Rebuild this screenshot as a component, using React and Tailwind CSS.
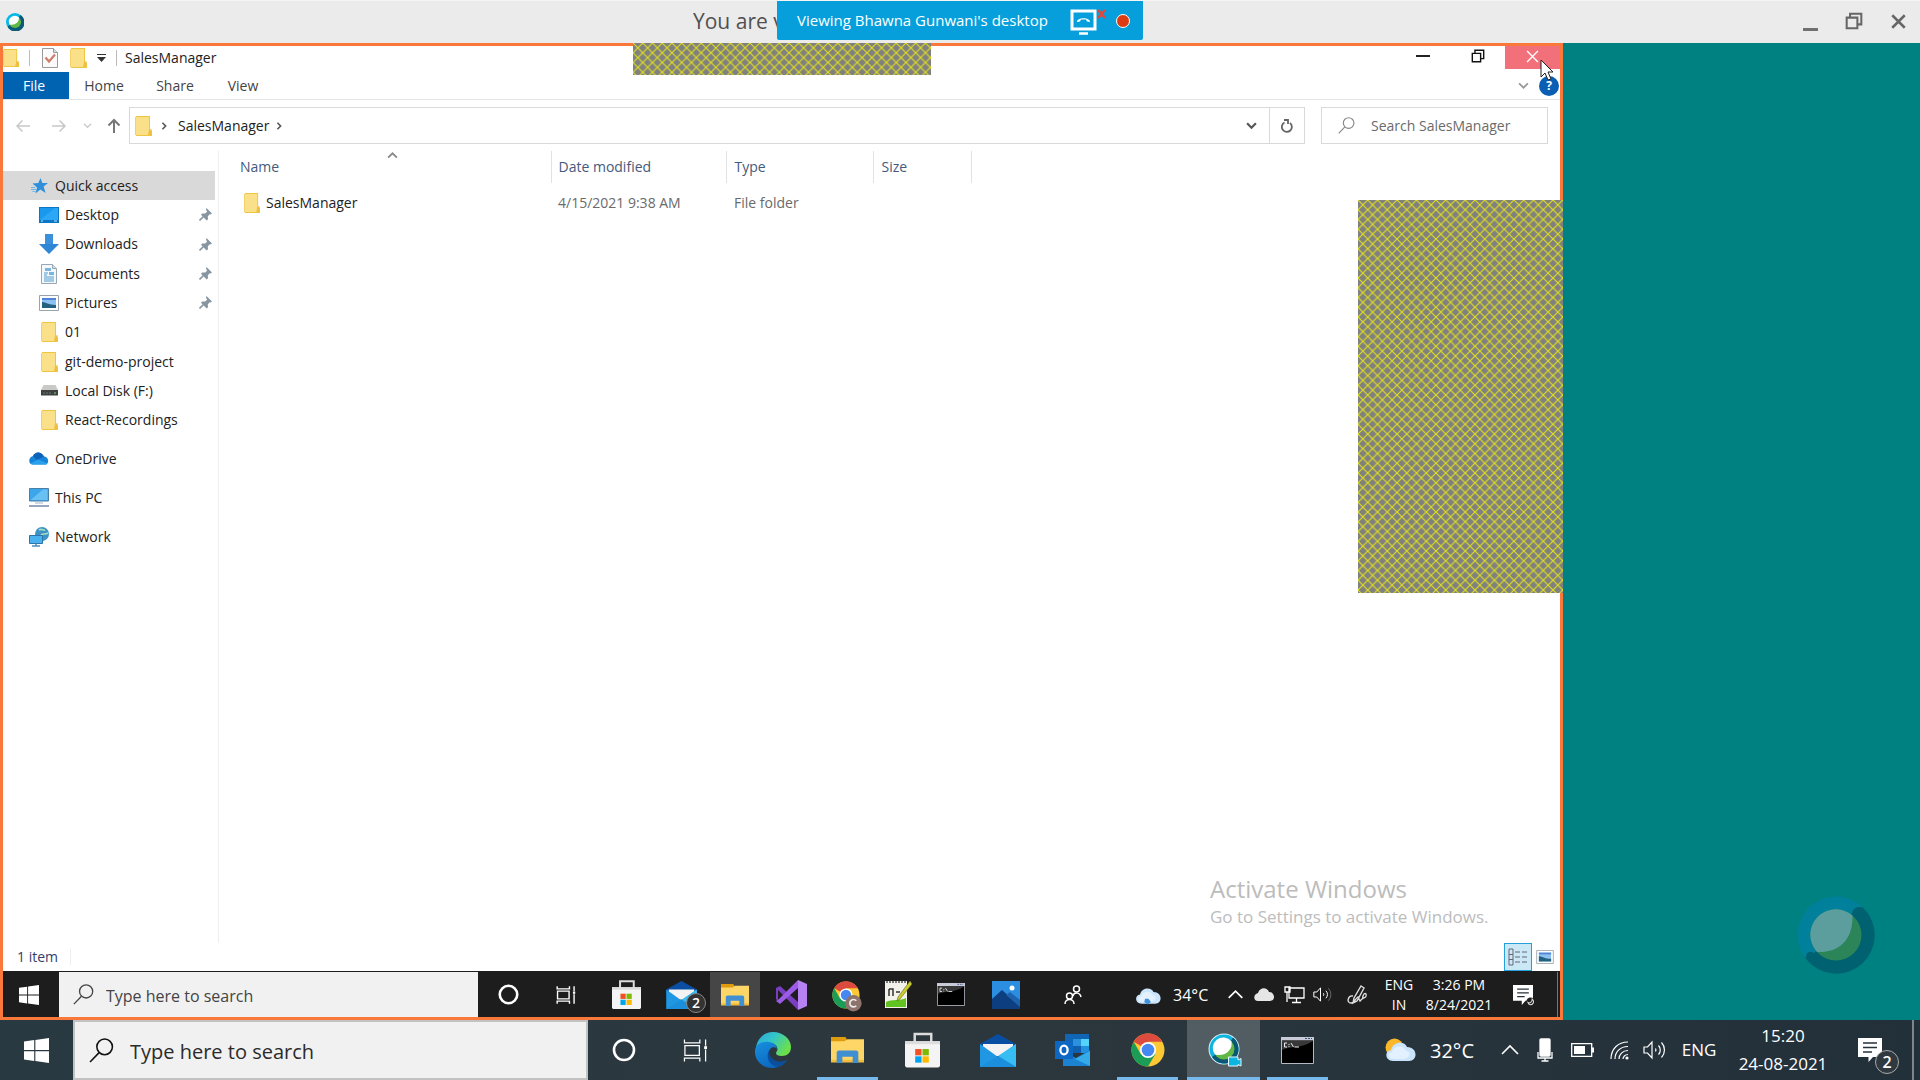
import React from "react";

const Folder = ({ className = "w-[17px] h-5" }) => (
  <svg viewBox="0 0 17 20" className={className} preserveAspectRatio="none" aria-hidden="true">
    <path d="M1 0h14v14l2 1v5H1z" fill="#efc544" />
    <path d="M0 1h14v13h2v5H0z" fill="#fbe08a" />
    <path d="M14 14l2.5-1V19H13z" fill="#edc040" />
    <path d="M0 1h1v18H0z" fill="#f3d069" />
  </svg>
);

const Chevron = ({ dir = "down", size = 10, color = "#555", width = 1.6 }) => {
  const d = {
    down: "M1 3l4 4 4-4",
    up: "M1 7l4-4 4 4",
    right: "M3 1l4 4-4 4",
  }[dir];
  return (
    <svg viewBox="0 0 10 10" width={size} height={size} fill="none" stroke={color} strokeWidth={width} aria-hidden="true">
      <path d={d} />
    </svg>
  );
};

const Arrow = ({ dir, color, width = 1.5 }) => {
  const d = {
    left: "M15 8H2M7.500 2.500L2 8l5.500 5.500",
    right: "M1 8h13M8.500 2.500L14 8l-5.500 5.500",
    up: "M8 15V2M2.500 7.500L8 2l5.500 5.500",
  }[dir];
  return (
    <svg viewBox="0 0 16 16" width="16" height="16" fill="none" stroke={color} strokeWidth={width} aria-hidden="true">
      <path d={d} />
    </svg>
  );
};

const Magnifier = ({ size, color, width = 1.5 }) => (
  <svg viewBox="0 0 24 24" width={size} height={size} fill="none" stroke={color} strokeWidth={width} aria-hidden="true">
    <circle cx="15" cy="8.500" r="7.500" />
    <path d="M9.700 14L1 23" />
  </svg>
);

const WindowsLogo = ({ size }) => (
  <svg viewBox="0 0 24 24" width={size} height={size} fill="#fff" aria-hidden="true">
    <path d="M0 3.400L9.800 2v9.500H0zM10.900 1.900L24 0v11.500H10.900zM0 12.600h9.800v9.500L0 20.700zM10.900 12.600H24V24l-13.100-1.900z" />
  </svg>
);

const Star = () => (
  <svg viewBox="0 0 18 16" width="18" height="16" aria-hidden="true">
    <path d="M9.500 0l1.800 5H17l-4.400 3.500 2 6.500-5.300-3.500L4.500 15.500 6 9.500 1.500 5.500l5.800-.5z" fill="#2f8fdd" />
    <path d="M0 11.500h5M1.500 13.500h3M0 9.500h4" stroke="#6cb6ea" strokeWidth="1" />
  </svg>
);

const Desktop = () => (
  <svg viewBox="0 0 20 16" width="20" height="16" aria-hidden="true">
    <path d="M0 0h20v16H0z" fill="#0b76c4" />
    <path d="M1 1h18v12H1z" fill="#1a98ee" />
    <path d="M1 13L16 1h3v12z" fill="#2ba7f5" />
    <path d="M2 14h2M15 14h3" stroke="#bde3ff" />
  </svg>
);

const Download = () => (
  <svg viewBox="0 0 20 20" width="20" height="20" aria-hidden="true">
    <path d="M6 0h8v10h6L10 20 0 10h6z" fill="#2f86d6" />
    <path d="M6 0h8v10h-8z" fill="#3a90dd" />
  </svg>
);

const Doc = () => (
  <svg viewBox="0 0 16 20" width="16" height="20" aria-hidden="true">
    <path d="M.5.5h11l4 4v15H.5z" fill="#f4f8fa" stroke="#99a7b1" />
    <path d="M11.500.500v4h4" fill="#d5dde2" stroke="#99a7b1" />
    <path d="M4 4h6v3H4zM8 8h5v3H8z" fill="#79b6df" />
    <path d="M3 9h4M3 11h3M3 13h10M3 15h10M3 17h10" stroke="#4f9bd0" />
  </svg>
);

const Picture = ({ w = 20, h = 16 }) => (
  <svg viewBox="0 0 20 16" width={w} height={h} aria-hidden="true">
    <path d="M.5.5h19v15H.5z" fill="#fff" stroke="#9aa3ab" />
    <path d="M3 3h14v10H3z" fill="#8fc0f2" />
    <path d="M3 3h14v2H3z" fill="#4f84d6" />
    <path d="M3 7c4 0 6 3 14 3v3H3z" fill="#24607f" />
  </svg>
);

const Disk = () => (
  <svg viewBox="0 0 17 11" width="17" height="11" aria-hidden="true">
    <path d="M2.500 0h12L17 5H0z" fill="#c9c9c7" />
    <path d="M0 5h17v5.500H0z" fill="#3d423f" />
    <path d="M2 8h8" stroke="#6f7672" strokeDasharray="2 1" />
    <path d="M13 8h2" stroke="#7fd08a" />
  </svg>
);

const OneDrive = () => (
  <svg viewBox="0 0 20 13" width="20" height="13" aria-hidden="true">
    <path d="M4 4C6-.5 12-1 15 4.500c4 0 6 6 2 8H4C-1 12.500-1 5 4 4z" fill="#1583d8" />
    <path d="M4 4C6-.5 12-1 15 4.500L8 8z" fill="#0b62b8" />
    <path d="M1.500 11.500L9 7.500l9.500 4c-.5.700-1 1-1.500 1H4c-1 0-2-.3-2.500-1z" fill="#2ba1ee" />
  </svg>
);

const Pc = () => (
  <svg viewBox="0 0 20 19" width="20" height="19" aria-hidden="true">
    <path d="M.5.5h19v12.500H.5z" fill="#3ba6ea" stroke="#4b7fa8" />
    <path d="M1.500 12L14 1.500h4.500V12z" fill="#69c0f3" />
    <path d="M6 15h8" stroke="#a9b5c4" />
    <path d="M0 18h20" stroke="#7687a8" strokeWidth="1.5" />
  </svg>
);

const NetworkIcon = () => (
  <svg viewBox="0 0 20 20" width="20" height="20" aria-hidden="true">
    <circle cx="13" cy="7" r="7" fill="#3d94c4" />
    <path d="M10 3c3-2 4 1 6 0M12 8c2-2 4 0 7-2" stroke="#a6dcc5" strokeWidth="1.6" fill="none" />
    <path d="M.5 8.500h13v8H.5z" fill="#49b2ee" stroke="#2c74ab" />
    <path d="M3 19h8M7 16.500V19" stroke="#4f8fb8" strokeWidth="1.5" />
  </svg>
);

const Pin = () => (
  <svg viewBox="0 0 13 13" width="13" height="13" aria-hidden="true">
    <path d="M7.500 0l5.500 5.500-1.500 1-.7-.3-2 2 .2 3-1.300 1.300L2 6.800l1.200-1.400 3 .2 2-2L7 2z" fill="#8795a1" />
    <path d="M5 8L.5 12.500" stroke="#8795a1" strokeWidth="1.600" />
  </svg>
);

const CheckDoc = () => (
  <svg viewBox="0 0 16 20" width="16" height="20" aria-hidden="true">
    <path d="M.5.5h11l4 4v15H.5z" fill="#fafafa" stroke="#9a9a9a" />
    <path d="M11.500.500v4h4" fill="#ddd" stroke="#9a9a9a" />
    <path d="M3.500 9.500l3.500 4 6-7" stroke="#cf7d6a" strokeWidth="2.200" fill="none" />
  </svg>
);

const Restore = ({ size, color, width = 1.4 }) => (
  <svg viewBox="0 0 16 16" width={size} height={size} fill="none" stroke={color} strokeWidth={width} aria-hidden="true">
    <path d="M1.500 5h9.500v9.500H1.500zM4.500 5V1.500h10v9.500H11" />
  </svg>
);

const Cross = ({ size, color, width = 1.3 }) => (
  <svg viewBox="0 0 12 12" width={size} height={size} stroke={color} strokeWidth={width} aria-hidden="true">
    <path d="M1 1l10 10M11 1L1 11" />
  </svg>
);

const MeetingLogo = ({ size }) => (
  <svg viewBox="0 0 18 18" width={size} height={size} aria-hidden="true">
    <circle cx="9" cy="9" r="9" fill="#07b8e8" />
    <path d="M14.500 2A9 9 0 1 1 1.500 13.500L9 9z" fill="#0a5a78" />
    <circle cx="9" cy="9" r="6" fill="#62b745" />
    <path d="M3.500 11.500A6 6 0 0 1 13 4.500c0 5-4 8-9.500 7z" fill="#fff" />
  </svg>
);

const MeetingWatermark = () => (
  <svg viewBox="0 0 78 78" width="78" height="78" aria-hidden="true">
    <circle cx="39" cy="39" r="38.500" fill="#00809a" />
    <path d="M66 11.500A38.500 38.500 0 1 1 9 63c-1-7 4-9 8-6l22-18L55 17c1-6 7-7 11-5.500z" fill="#006270" />
    <circle cx="39" cy="39" r="25.500" fill="#2b8558" />
    <path d="M20 56A25.500 25.500 0 0 1 55.500 19.500C56 42 44 57 20 56z" fill="#5c9e9e" />
  </svg>
);

const Cortana = ({ size, width }) => (
  <svg viewBox="0 0 24 24" width={size} height={size} fill="none" stroke="#fff" strokeWidth={width} aria-hidden="true">
    <circle cx="12" cy="12" r="10" />
  </svg>
);

const TaskView = ({ size, width = 1.3 }) => (
  <svg viewBox="0 0 26 24" width={size} height={size} fill="none" stroke="#fff" strokeWidth={width} aria-hidden="true">
    <path d="M2 7h15v10H2zM1.500.500v3.500h16V.500M1.500 23.500V20h16v3.500M23.500.500v6.500M23.500 11v12.500" />
    <path d="M22 7.500h3v3h-3z" fill="#fff" stroke="none" />
  </svg>
);

const Edge = () => (
  <svg viewBox="0 0 36 36" width="36" height="36" aria-hidden="true">
    <defs>
      <linearGradient id="edgeTop" x1="0" y1="0" x2="1" y2="0.500">
        <stop offset="0" stopColor="#2aa6dd" />
        <stop offset="0.500" stopColor="#34c5c8" />
        <stop offset="1" stopColor="#6be04a" />
      </linearGradient>
      <linearGradient id="edgeBody" x1="0" y1="0" x2="0.600" y2="1">
        <stop offset="0" stopColor="#1791df" />
        <stop offset="1" stopColor="#0c64bd" />
      </linearGradient>
    </defs>
    <path d="M1 15C3 5 10 0 18 0c10 0 18 7 18 15 0 6-4 9-9 9-4 0-6-1-6-3 0-1 1.500-2 1.500-4 0-3-3-6-8-6-6 0-11 2-13.500 6z" fill="url(#edgeTop)" />
    <path d="M0 18c1-6 7-9 14-8 5 .5 8 4 8 7-2-3-8-2-8 4 0 8 9 12 18 7-4 6-10 8-15 8C7 36-1 28 0 18z" fill="url(#edgeBody)" />
    <path d="M14 18c-4 8 1 16 9 17 4-1 7-4 9-7-9 4-18 0-18-10z" fill="#0b4f9c" />
  </svg>
);

const Explorer = ({ w, h }) => (
  <svg viewBox="0 0 32 27" width={w} height={h} aria-hidden="true">
    <path d="M0 1h14l2 3-2 3H0z" fill="#dd9b0d" />
    <path d="M0 5h13l3-2h16v22H0z" fill="#fdd667" />
    <path d="M0 23h32v2.500H0z" fill="#f2bd3d" />
    <path d="M5.500 26V16c0-1 1-2 2-2h17c1 0 2 1 2 2v10H21v-6H11v6z" fill="#3f8fd2" />
  </svg>
);

const Store = ({ w, h }) => (
  <svg viewBox="0 0 36 36" width={w} height={h} aria-hidden="true">
    <path d="M10 12V1.500h17V12" fill="none" stroke="#dcdcdc" strokeWidth="2.500" />
    <path d="M0 9h36v25c0 1-1 2-2 2H2c-1 0-2-1-2-2z" fill="#f4f4f4" />
    <path d="M0 9h36v3H0z" fill="#ddd" />
    <path d="M10.500 17h6.500v6.500h-6.500z" fill="#f25022" />
    <path d="M18 17h6.500v6.500H18z" fill="#7fba00" />
    <path d="M10.500 24.500h6.500V31h-6.500z" fill="#00a4ef" />
    <path d="M18 24.500h6.500V31H18z" fill="#ffb900" />
  </svg>
);

const Mail = ({ w, h }) => (
  <svg viewBox="0 0 36 33" width={w} height={h} aria-hidden="true">
    <path d="M0 10L18 0l18 10v6H0z" fill="#0a4ea3" />
    <path d="M3 10h30v12H3z" fill="#f3f3f3" />
    <path d="M0 10l18 13L36 10v23H0z" fill="#1f97e2" />
    <path d="M36 10L18 22l18 11z" fill="#36bdf3" />
    <path d="M0 33l18-11 18 11z" fill="#1b8fdc" />
  </svg>
);

const Outlook = () => (
  <svg viewBox="0 0 35 32" width="35" height="32" aria-hidden="true">
    <path d="M10 0h24v18H10z" fill="#1066b5" />
    <path d="M18 5h8v7h-8z" fill="#2a92dc" />
    <path d="M26 5h8v7h-8z" fill="#53d4fb" />
    <path d="M18 12h8v7h-8z" fill="#0f5fae" />
    <path d="M26 12h8v7h-8z" fill="#2291df" />
    <path d="M8 17l13 7 14-8v16H8z" fill="#1c83d3" />
    <path d="M35 17L20 25l15 7z" fill="#36abea" />
    <path d="M0 7h18v18H0z" fill="#0d68c4" />
    <ellipse cx="9" cy="16" rx="3.600" ry="4.400" fill="none" stroke="#fff" strokeWidth="2.300" />
  </svg>
);

const Chrome = ({ size, badge }) => (
  <svg viewBox="0 0 34 34" width={size} height={size} className="overflow-visible" aria-hidden="true">
    <circle cx="17" cy="17" r="16.500" fill="#fcc934" />
    <path d="M17 17L2.700 8.700A16.500 16.500 0 0 1 31.300 8.700H17z" fill="#dd4b3e" />
    <path d="M2.700 8.700A16.500 16.500 0 0 0 17 33.500l7.300-12.300L17 17l-7.200 4.200z" fill="#1b9d58" />
    <circle cx="17" cy="17" r="8" fill="#fff" />
    <circle cx="17" cy="17" r="6.300" fill="#4688f1" />
    {badge && <circle cx="26" cy="27" r="10" fill="#8d736c" />}
    {badge && <path d="M29.500 24a4.500 4.500 0 1 0 0 6" fill="none" stroke="#eee" strokeWidth="2" />}
  </svg>
);

const Webex = () => (
  <svg viewBox="0 0 34 34" width="34" height="34" className="overflow-visible" aria-hidden="true">
    <circle cx="17" cy="16" r="15.500" fill="#d9f2f8" />
    <circle cx="17" cy="16" r="14.500" fill="#0cb4e0" />
    <path d="M26 4.600A14.500 14.500 0 1 1 5 24l4-3a10 10 0 0 0 15-13z" fill="#0a5674" />
    <circle cx="17" cy="16" r="10.500" fill="#62b745" />
    <path d="M8 21.500A10.500 10.500 0 0 1 24.500 8.500C26 17 18 24 8 21.500z" fill="#fff" />
    <path d="M21.500 24h9.500v3l3-1.500V33l-3-1.500V33h-9.500z" fill="#0cb4e0" stroke="#e8f8fc" strokeWidth="1" />
  </svg>
);

const Terminal = ({ w, h }) => (
  <svg viewBox="0 0 33 27" width={w} height={h} aria-hidden="true">
    <path d="M.5.5h32v26H.5z" fill="#000" stroke="#b4b9c4" />
    <path d="M0 0h33v3.500H0z" fill="#c9ccd8" />
    <path d="M24 1.500h7" stroke="#35508f" strokeDasharray="2 1" />
    <path d="M1 13C8 9 20 12 32 4v-.5H1z" fill="#383838" />
    <path d="M6 6H3.500v4H6M8 7v1M8 9v1M10 6l2.500 4M13.500 10H18" stroke="#eee" fill="none" />
  </svg>
);

const Cloud = ({ sun, rain, w, h }) => (
  <svg viewBox="0 0 31 24" width={w} height={h} aria-hidden="true">
    {sun && <circle cx="9.500" cy="9.500" r="9" fill="#fbb62a" />}
    <path d="M8 23c-8 0-9-10-2-11C8 3 20 3 22 9c11 0 11 14 2 14z" fill="#c9e4fb" />
    <path d="M8 21c-6 0-5-7-1-7 2-7 12-7 14-1 6 0 4 8-3 8z" fill="#e2f1fd" />
    {rain && <path d="M12 17l4 0 3 4-4 3-4-3z" fill="#3f91dc" />}
  </svg>
);

const Notification = ({ size, badge }) => (
  <svg viewBox="0 0 24 24" width={size} height={size} className="overflow-visible" aria-hidden="true">
    <path d="M0 0h24v19h-9l-4.500 5V19H0z" fill="#fff" />
    <path d="M5 5h14M5 9.500h14M5 14h9" stroke="#27323a" strokeWidth="1.500" />
    {badge && <circle cx="21" cy="20" r="5" fill="#1d1d1d" />}
    {badge && <path d="M19 23a3.500 3.500 0 0 0 4-6c0 4-3 5-5 4z" fill="none" stroke="#ddd" strokeWidth="1.300" />}
  </svg>
);

const Volume = ({ w, h, quiet = "#fff" }) => (
  <svg viewBox="0 0 24 20" width={w} height={h} fill="none" stroke="#fff" strokeWidth="1.200" aria-hidden="true">
    <path d="M1 7h3.500L9 2v16l-4.500-5H1z" />
    <path d="M12.500 8.500a3 3 0 0 1 0 3M15.500 5.500a6.500 6.500 0 0 1 0 9" />
    <path d="M18.500 2.500a11 11 0 0 1 0 15" stroke={quiet} />
  </svg>
);

const Hatch = ({ id }) => (
  <svg width="100%" height="100%" aria-hidden="true">
    <defs>
      <pattern id={id} width="9.750" height="9.750" patternUnits="userSpaceOnUse">
        <path d="M0 0h10v10H0z" fill="#808080" />
        <path d="M-1-1l12 12M-1 10.750l12-12" stroke="#e0e01c" strokeWidth="1.150" />
      </pattern>
    </defs>
    <rect width="100%" height="100%" fill={`url(#${id})`} />
  </svg>
);

const quickItems = [
  { label: "Desktop", icon: <Desktop />, pinned: true },
  { label: "Downloads", icon: <Download />, pinned: true },
  { label: "Documents", icon: <Doc />, pinned: true },
  { label: "Pictures", icon: <Picture />, pinned: true },
  { label: "01", icon: <Folder /> },
  { label: "git-demo-project", icon: <Folder /> },
  { label: "Local Disk (F:)", icon: <Disk /> },
  { label: "React-Recordings", icon: <Folder /> },
];

const rootItems = [
  { label: "OneDrive", icon: <OneDrive /> },
  { label: "This PC", icon: <Pc /> },
  { label: "Network", icon: <NetworkIcon /> },
];

function MeetingBar() {
  return (
    <header className="grid h-[43px] grid-cols-[777fr_1143fr] border-t border-[#f5f5f5] bg-[#ebebeb]">
      <div className="flex min-w-0 items-center pl-1.5">
        <MeetingLogo size={18} />
        <p className="ml-auto w-[84px] overflow-hidden whitespace-nowrap text-[21px] text-[#505050]">You are v</p>
      </div>
      <div className="flex items-start justify-between">
        <div className="flex h-[39px] w-[366px] items-center rounded-b-xs bg-[#069fdb] pl-5 text-[15px] text-white">
          <span className="w-[273px] whitespace-nowrap">Viewing Bhawna Gunwani's desktop</span>
          <svg viewBox="0 0 36 28" width="36" height="28" aria-hidden="true">
            <path d="M2 4h23v18H2z" fill="none" stroke="#fff" strokeWidth="3" />
            <path d="M7 15c0-5 13-5 13 0l-3-.5-1-2h-5l-1 2z" fill="#fff" />
            <path d="M9 26.500h9" stroke="#fff" strokeWidth="2.500" />
            <path d="M28 3l7 8M35 3l-7 8" stroke="#e0483e" strokeWidth="2.500" />
          </svg>
          <span className="ml-2.5 size-3.5 rounded-full border border-white bg-[#dd3b12]" />
        </div>
        <div className="flex h-10 items-center gap-6 pr-3">
          <button aria-label="Minimize" className="flex h-5 w-5 items-end justify-center">
            <span className="h-[3px] w-[15px] bg-[#707070]" />
          </button>
          <button aria-label="Restore" className="flex w-5 justify-center"><Restore size={18} color="#666" width={1.8} /></button>
          <button aria-label="Close" className="flex w-5 justify-center"><Cross size={15} color="#666" width={2} /></button>
        </div>
      </div>
    </header>
  );
}

function ExplorerHeader() {
  return (
    <>
      <div className="flex h-[26px] items-center pb-[3px]">
        <Folder className="h-[18px] w-4" />
        <span className="ml-2.5 h-4 w-px bg-[#bbb]" />
        <span className="ml-3 flex"><CheckDoc /></span>
        <span className="ml-3 flex"><Folder /></span>
        <svg viewBox="0 0 9 8" width="9" height="8" className="ml-2.5" aria-hidden="true">
          <path d="M0 .5h9" stroke="#333" />
          <path d="M0 3h9L4.500 8z" fill="#333" />
        </svg>
        <span className="ml-2.5 h-4 w-px bg-[#bbb]" />
        <h1 className="ml-2 text-sm text-[#222]">SalesManager</h1>
        <div className="ml-auto flex h-full items-start">
          <button aria-label="Minimize window" className="flex h-5 w-14 items-center justify-center"><span className="h-[2px] w-3.5 bg-[#222]" /></button>
          <button aria-label="Restore window" className="flex h-5 w-[54px] items-center justify-center"><Restore size={14} color="#111" width={1.6} /></button>
          <button aria-label="Close window" className="flex h-[23px] w-[55px] items-center justify-center bg-[#f1707a] pb-0.5"><Cross size={13} color="#fff" /></button>
        </div>
      </div>
      <nav className="flex h-7 items-stretch border-b border-[#e5e5e5] text-sm text-[#444]">
        <button className="w-[66px] bg-[#0063b1] pr-1 text-white">File</button>
        <button className="w-[70px]">Home</button>
        <button className="w-[72px]">Share</button>
        <button className="w-16">View</button>
        <div className="ml-auto flex items-center gap-2.5 pr-px">
          <button aria-label="Expand ribbon"><Chevron size={11} color="#999" /></button>
          <button aria-label="Help" className="size-5 rounded-full bg-[#0a5fb4] text-xs font-bold text-white">?</button>
        </div>
      </nav>
      <div className="flex h-[51px] items-center pr-3">
        <div className="flex w-[126px] items-center pl-3">
          <button aria-label="Back"><Arrow dir="left" color="#c8c8c8" /></button>
          <button aria-label="Forward" className="ml-5"><Arrow dir="right" color="#c8c8c8" /></button>
          <button aria-label="Recent" className="ml-4"><Chevron size={9} color="#ccc" /></button>
          <button aria-label="Up" className="ml-3.5"><Arrow dir="up" color="#777" width={2} /></button>
        </div>
        <div className="flex h-[37px] flex-1 items-center border border-[#d9d9d9] pl-[5px] text-sm text-[#222]">
          <Folder />
          <span className="ml-2"><Chevron dir="right" size={8} width={2} /></span>
          <button className="ml-2.5">SalesManager</button>
          <span className="ml-1.5"><Chevron dir="right" size={8} width={2} /></span>
          <button aria-label="History" className="ml-auto mr-3"><Chevron size={11} width={2} /></button>
          <button aria-label="Refresh" className="flex h-full w-[35px] items-center justify-center border-l border-[#d9d9d9]">
            <svg viewBox="0 0 12 14" width="12" height="14" fill="none" stroke="#666" strokeWidth="1.800" aria-hidden="true">
              <path d="M9 4a5 5 0 1 1-5.500-.5M3 1h4v4" />
            </svg>
          </button>
        </div>
        <label className="ml-4 flex h-[37px] w-[227px] items-center border border-[#d9d9d9] pl-4">
          <Magnifier size={17} color="#888" width={1.6} />
          <input aria-label="Search SalesManager" placeholder="Search SalesManager" className="ml-4 w-40 text-sm outline-none placeholder:text-[#6b6b6b]" />
        </label>
      </div>
    </>
  );
}

function Sidebar() {
  return (
    <aside className="w-[216px] shrink-0 border-r border-[#eee] pt-5 text-sm text-[#222]">
      <ul className="grid h-[264px] grid-rows-9">
        <li className="mr-[3px]">
          <a href="#quick" className="flex h-full items-center bg-[#d9d9d9] pl-7"><Star /><span className="ml-1.5">Quick access</span></a>
        </li>
        {quickItems.map((item) => (
          <li key={item.label}>
            <a href="#folder" className="flex h-full items-center pl-9 pr-1.5">
              <span className="flex w-5 justify-center">{item.icon}</span>
              <span className="ml-1.5 flex-1">{item.label}</span>
              {item.pinned && <Pin />}
            </a>
          </li>
        ))}
      </ul>
      <ul className="mt-1">
        {rootItems.map((item) => (
          <li key={item.label}>
            <a href="#root" className="flex h-[39px] items-center pl-[26px]">{item.icon}<span className="ml-1.5">{item.label}</span></a>
          </li>
        ))}
      </ul>
    </aside>
  );
}

function FileList() {
  return (
    <main className="min-w-0 flex-1">
      <table className="table-fixed border-collapse text-left text-sm">
        <colgroup>
          <col className="w-[332px]" />
          <col className="w-[175px]" />
          <col className="w-[147px]" />
          <col className="w-[98px]" />
        </colgroup>
        <thead className="text-[#45597b]">
          <tr className="h-8">
            <th className="relative border-r border-[#e2e2e2] pl-[21px] font-normal">
              Name
              <span className="absolute left-[168px] -top-px"><Chevron dir="up" size={11} color="#888" /></span>
            </th>
            <th className="border-r border-[#e2e2e2] pl-[7px] font-normal">Date modified</th>
            <th className="border-r border-[#e2e2e2] pl-2 font-normal">Type</th>
            <th className="border-r border-[#e2e2e2] pl-2 font-normal">Size</th>
          </tr>
        </thead>
        <tbody>
          <tr className="h-10 text-[#6a6a6a]">
            <td className="pl-[25px]"><span className="flex items-center gap-1.5 text-[#222]"><Folder className="h-5 w-4" />SalesManager</span></td>
            <td className="pl-[7px]">4/15/2021 9:38 AM</td>
            <td className="pl-2">File folder</td>
            <td />
          </tr>
        </tbody>
      </table>
    </main>
  );
}

function SharedTaskbar() {
  return (
    <footer className="flex h-[46px] items-stretch bg-[#1d1d1d] pt-px text-white">
      <button aria-label="Shared start" className="flex w-14 items-center justify-center pr-1"><WindowsLogo size={20} /></button>
      <label className="flex w-[419px] items-center bg-[#f1f1f1] pl-3.5">
        <Magnifier size={21} color="#444" />
        <input aria-label="Shared desktop search" placeholder="Type here to search" className="ml-3 w-72 pt-0.5 text-base outline-none placeholder:text-[#444]" />
      </label>
      <button aria-label="Cortana" className="flex w-15 items-center justify-center"><Cortana size={21} width={3} /></button>
      <button aria-label="Task view" className="flex w-14 items-center justify-center"><TaskView size={20} width={1.8} /></button>
      <button aria-label="Store" className="flex w-16 items-center justify-center"><Store w={29} h={29} /></button>
      <button aria-label="Mail" className="relative flex w-13 items-center justify-center pr-1.5">
        <Mail w={31} h={28} />
        <span className="absolute right-1 bottom-1 flex size-5 items-center justify-center rounded-full border border-[#888] bg-[#333] text-sm font-semibold">2</span>
      </button>
      <button aria-label="File explorer" className="flex w-[50px] items-center justify-center bg-[#464646]"><Explorer w={28} h={24} /></button>
      <button aria-label="Visual Studio" className="flex w-[62px] items-center justify-center">
        <svg viewBox="0 0 31 30" width="31" height="30" aria-hidden="true">
          <path d="M0 8l4-2 18 16V30L2 10v11l-2-2z" fill="#7a3fc0" />
          <path d="M0 21l4 3L22 8V0L3 19z" fill="#9a5be6" />
          <path d="M22 0l9 4v22l-9 4z" fill="#b781f4" />
        </svg>
      </button>
      <button aria-label="Chrome" className="flex w-12 items-center justify-center"><Chrome size={28} badge /></button>
      <button aria-label="Notepad++" className="flex w-14 items-center justify-center">
        <svg viewBox="0 0 28 29" width="28" height="29" aria-hidden="true">
          <path d="M1 1h22v27H1z" fill="#f2f2ea" />
          <path d="M2 2h20" stroke="#777" strokeWidth="2" strokeDasharray="2 1" />
          <path d="M2 22c6-3 14-1 20-4v9H2z" fill="#62c222" />
          <path d="M5 9v7M5 9h4v7M12 12h4" stroke="#333" strokeWidth="1.500" fill="none" />
          <path d="M26 1L14 17l-1 4 3-2L28 4z" fill="#c7cf2b" stroke="#675f28" strokeWidth=".6" />
        </svg>
      </button>
      <button aria-label="Command prompt" className="flex w-[50px] items-center justify-center"><Terminal w={28} h={23} /></button>
      <button aria-label="Photos" className="flex w-15 items-center justify-center">
        <svg viewBox="0 0 28 28" width="28" height="28" aria-hidden="true">
          <path d="M0 0h28v28H0z" fill="#2c8ee0" />
          <path d="M0 18L10 9l18 16v3H0z" fill="#0d3f80" />
          <path d="M14 14l4-3 10 8v7z" fill="#1c62ae" />
          <circle cx="20" cy="7" r="2.500" fill="#fff" />
        </svg>
      </button>
      <button aria-label="People" className="flex w-[74px] items-center justify-center">
        <svg viewBox="0 0 18 20" width="18" height="20" fill="none" stroke="#fff" strokeWidth="1.500" aria-hidden="true">
          <circle cx="12.500" cy="4" r="3" />
          <circle cx="5.500" cy="11" r="3" />
          <path d="M9 11c1-4 7-4 8 1M1 19c0-6 9-6 9 0" />
        </svg>
      </button>
      <div className="ml-auto flex items-stretch">
        <button className="flex w-[92px] items-center gap-3 pl-1.5"><Cloud rain w={26} h={21} /><span className="text-base">34°C</span></button>
        <button aria-label="Shared tray" className="flex w-7 items-center justify-center"><Chevron dir="up" size={17} color="#fff" width={1} /></button>
        <span className="flex w-[30px] items-center justify-center">
          <svg viewBox="0 0 20 13" width="20" height="13" aria-hidden="true"><path d="M4 5C6-1 13-1 15 4c6 0 7 9 1 9H4C-1 13-1 6 4 5z" fill="#e6e6e6" /></svg>
        </span>
        <span className="flex w-[30px] items-center justify-center">
          <svg viewBox="0 0 21 18" width="21" height="18" fill="none" stroke="#fff" strokeWidth="1.300" aria-hidden="true">
            <path d="M5 2h15v10H5zM12.500 12v4M8 16.500h9M1 1h5v5H1zM3 6v10" />
          </svg>
        </span>
        <span className="flex w-7 items-center justify-center"><Volume w={20} h={17} quiet="#666" /></span>
        <span className="flex w-10 items-center justify-center">
          <svg viewBox="0 0 20 20" width="20" height="20" fill="none" stroke="#ddd" strokeWidth="1.400" aria-hidden="true">
            <path d="M14 1l3 2-7 13-4 2 1-5zM6 11c-5-1-7 7-2 7 3 0 4-4 7-6l2 4c4-5 7-2 6-7-2-2-4 3-3 5" />
          </svg>
        </span>
        <button className="w-11 text-sm leading-5">ENG<br />IN</button>
        <button className="w-[76px] whitespace-nowrap text-sm leading-5">3:26 PM<br />8/24/2021</button>
        <button aria-label="Shared notifications" className="mr-2 flex w-[52px] items-center justify-center"><Notification size={20} badge /></button>
        <span className="mr-0.5 w-px bg-[#777]" />
      </div>
    </footer>
  );
}

function SharedDesktop() {
  return (
    <section className="relative flex min-w-0 flex-col border-[3px] border-[#f9783a] bg-white">
      <ExplorerHeader />
      <div className="flex flex-1">
        <Sidebar />
        <FileList />
      </div>
      <div className="flex h-7 items-center pl-3.5 text-sm text-[#33406a]">
        <span>1 item</span>
        <span className="ml-3 h-4 w-px bg-[#eee]" />
        <div className="ml-auto flex items-center gap-1 pr-1.5">
          <button aria-label="Details view" className="flex h-7 w-7 items-center justify-center border border-[#26a0da] bg-[#cbe8f6]">
            <svg viewBox="0 0 20 18" width="20" height="18" fill="none" stroke="#667" aria-hidden="true">
              <path d="M1 1h4v16H1zM1 6.500h4M1 11.500h4M7 4h5M14 4h5M7 9h5M14 9h5M7 14h5M14 14h5" />
            </svg>
          </button>
          <button aria-label="Thumbnail view"><Picture w={18} h={14} /></button>
        </div>
      </div>
      <SharedTaskbar />

      <div className="absolute right-[62px] bottom-[88px] w-[288px] whitespace-nowrap text-[#bcbcbc]">
        <p className="text-2xl leading-8">Activate Windows</p>
        <p className="text-[17px] leading-6">Go to Settings to activate Windows.</p>
      </div>
      <div className="absolute -top-[3px] left-[630px] h-8 w-[298px]"><Hatch id="hatchTop" /></div>
      <div className="absolute -right-[3px] top-[154px] h-[393px] w-[205px]"><Hatch id="hatchSide" /></div>
      <svg viewBox="0 0 14 22" width="14" height="22" className="absolute top-[13px] right-1.5" aria-hidden="true">
        <path d="M1 1v17l4-4 3 7 3-1-3-7h5z" fill="#fff" stroke="#222" />
      </svg>
    </section>
  );
}

const slot = "flex w-[75px] items-center justify-center border-b-3 border-transparent pt-[3px]";
const runningSlot =
  "relative flex w-[75px] items-center justify-center border-b-3 border-transparent pt-[3px] after:absolute after:-bottom-[3px] after:h-[3px] after:w-[61px] after:bg-[#76b9ed]";

function HostTaskbar() {
  return (
    <footer className="flex h-15 items-stretch bg-linear-to-r from-[#283941] via-[#2c373d] to-[#22303a] text-white">
      <button aria-label="Start" className="flex w-[73px] items-center justify-center"><WindowsLogo size={25} /></button>
      <label className="flex w-[515px] items-center border-2 border-[#c2c2c2] bg-[#f1f1f1] pl-3.5">
        <Magnifier size={25} color="#111" width={1.5} />
        <input aria-label="Search" placeholder="Type here to search" className="ml-4 w-96 pt-[3px] text-xl outline-none placeholder:text-[#2b2b2b]" />
      </label>
      <button aria-label="Cortana search" className="flex w-[72px] items-center justify-center"><Cortana size={24} width={2.6} /></button>
      <button aria-label="Task view" className="flex w-[75px] items-center justify-center pr-1"><TaskView size={25} /></button>
      <button aria-label="Edge" className={slot}><Edge /></button>
      <button aria-label="File explorer" className={runningSlot}><Explorer w={33} h={28} /></button>
      <button aria-label="Store" className={slot}><Store w={35} h={36} /></button>
      <button aria-label="Mail" className={slot}><Mail w={36} h={33} /></button>
      <button aria-label="Outlook" className={slot}><Outlook /></button>
      <button aria-label="Chrome" className={runningSlot}><Chrome size={34} /></button>
      <button aria-label="Meetings" className="ml-0.5 flex w-[73px] items-center justify-center border-b-3 border-[#76b9ed] bg-[#525c63] pt-[3px]"><Webex /></button>
      <button aria-label="Command prompt" className={runningSlot}><Terminal w={33} h={27} /></button>
      <div className="ml-auto flex items-stretch">
        <button className="flex w-[108px] items-center gap-3.5"><Cloud sun w={31} h={24} /><span className="pt-0.5 text-xl">32°C</span></button>
        <button aria-label="Tray" className="flex w-[34px] items-center justify-center"><Chevron dir="up" size={20} color="#fff" width={0.8} /></button>
        <span className="flex w-9 items-center justify-center">
          <svg viewBox="0 0 16 24" width="16" height="24" fill="none" stroke="#fff" strokeWidth="1.300" aria-hidden="true">
            <rect x="3" y="1" width="10" height="17" rx="1" fill="#fff" />
            <path d="M1 14v6h14v-6M8 20v3M4.500 23h7" />
          </svg>
        </span>
        <span className="flex w-[38px] items-center justify-center">
          <svg viewBox="0 0 23 14" width="23" height="14" aria-hidden="true">
            <path d="M.7.700h20v12.600H.7z" fill="none" stroke="#fff" strokeWidth="1.300" />
            <path d="M3 3h11v8H3zM21 4.500h2v5h-2z" fill="#fff" />
          </svg>
        </span>
        <span className="flex w-9 items-center justify-center">
          <svg viewBox="0 0 19 19" width="19" height="19" fill="none" stroke="#fff" strokeWidth="1.200" aria-hidden="true">
            <path d="M1 18C1 8 8 1 18 1M5 18c0-7 5-12.500 13-12.500M9 18c0-4.500 3.500-8.500 9-8.500M13 18c0-2 2-4.500 5-4.500" />
            <circle cx="17" cy="17" r="1.600" fill="#fff" stroke="none" />
          </svg>
        </span>
        <span className="flex w-9 items-center justify-center"><Volume w={24} h={20} /></span>
        <button className="w-[52px] text-[17px]">ENG</button>
        <button className="w-[116px] whitespace-nowrap text-[17px] leading-7">15:20<br />24-08-2021</button>
        <button aria-label="Notifications, 2 new" className="relative flex w-[58px] items-center justify-center">
          <Notification size={24} />
          <span className="absolute right-0 bottom-1.5 flex size-6 items-center justify-center rounded-full border border-[#aaa] bg-[#30393f] text-base font-semibold">2</span>
        </button>
        <span className="mr-1.5 ml-[13px] w-0.5 bg-[#7d868b]" />
      </div>
    </footer>
  );
}

export default function App() {
  return (
    <div className="flex min-h-screen flex-col overflow-hidden font-['Open_Sans','Noto_Sans',sans-serif]">
      <MeetingBar />
      <div className="grid flex-1 grid-cols-[1563fr_357fr] bg-[#008181]">
        <SharedDesktop />
        <div className="flex items-end justify-end pr-[45px] pb-[46px]"><MeetingWatermark /></div>
      </div>
      <HostTaskbar />
    </div>
  );
}
